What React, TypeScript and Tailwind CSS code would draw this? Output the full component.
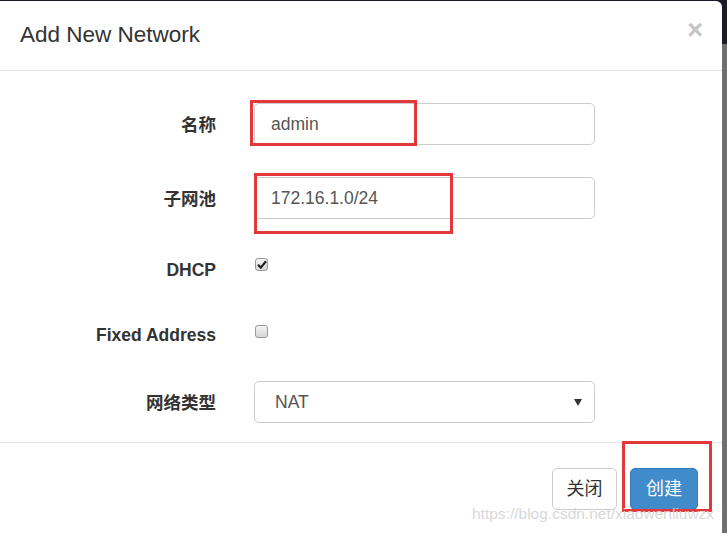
import React from 'react'

const font = { fontFamily: '"Liberation Sans", "Noto Sans CJK SC", sans-serif' }

function Label({ children }: { children: React.ReactNode }) {
  return (
    <div className="w-[216px] shrink-0 pt-[3px] text-right text-[17.5px] font-bold text-[#333]">
      {children}
    </div>
  )
}

function Checkbox({ checked }: { checked?: boolean }) {
  return (
    <span className="flex h-[13px] w-[13px] items-center justify-center rounded-[3px] border border-[#9a9a9a] bg-gradient-to-b from-[#f4f4f4] to-[#d6d6d6]">
      {checked && (
        <svg width="10" height="9" viewBox="0 0 10 9">
          <path d="M1 4.8 L3.8 7.6 L9 1.2" fill="none" stroke="#222" strokeWidth="2.2" />
        </svg>
      )}
    </span>
  )
}

export default function App() {
  return (
    <div
      style={font}
      className="relative h-[533px] w-[727px] overflow-hidden bg-[linear-gradient(to_bottom,#1d1a29_0px,#1d1a29_44px,#6f6f6f_44px)] pt-[1px]"
    >
      <div className="h-[532px] w-[722px] rounded-tr-[6px] bg-white">
        {/* header */}
        <div className="relative flex h-[70px] items-center border-b border-[#e5e5e5] px-[20px]">
          <h4 className="text-[22.5px] leading-none text-[#333]">Add New Network</h4>
          <span className="absolute right-[19px] top-[16px] text-[27px] font-bold leading-none text-[#c4c4c4]">×</span>
        </div>

        {/* body */}
        <div className="pb-[19px] pt-[32px]">
          <div className="flex h-[42px] items-center">
            <Label>名称</Label>
            <div className="ml-[38px] flex h-[42px] w-[341px] items-center rounded-[5px] border border-[#ccc] pl-[16px] text-[17.5px] text-[#555]">
              admin
            </div>
          </div>
          <div className="mt-[32px] flex h-[42px] items-center">
            <Label>子网池</Label>
            <div className="ml-[38px] flex h-[42px] w-[341px] items-center rounded-[5px] border border-[#ccc] pl-[16px] text-[17.5px] text-[#555]">
              172.16.1.0/24
            </div>
          </div>
          <div className="mt-[32px] flex h-[36px] items-center">
            <Label>DHCP</Label>
            <div className="ml-[39px] -mt-[9px]">
              <Checkbox checked />
            </div>
          </div>
          <div className="mt-[29px] flex h-[36px] items-center">
            <Label>Fixed Address</Label>
            <div className="ml-[39px] -mt-[5px]">
              <Checkbox />
            </div>
          </div>
          <div className="mt-[29px] flex h-[42px] items-center">
            <Label>网络类型</Label>
            <div className="ml-[38px] flex h-[42px] w-[341px] items-center justify-between rounded-[5px] border border-[#ccc] pl-[20px] pr-[12px] text-[17.5px] text-[#555]">
              <span>NAT</span>
              <svg width="8" height="7" viewBox="0 0 8 7">
                <path d="M0 0 H8 L4 7 Z" fill="#333" />
              </svg>
            </div>
          </div>
        </div>

        {/* footer */}
        <div className="flex justify-end gap-[13px] border-t border-[#e5e5e5] pr-[24px] pt-[25px]">
          <button className="h-[42px] w-[65px] rounded-[5px] border border-[#ccc] bg-white text-[18px] text-[#333]">
            关闭
          </button>
          <button className="h-[42px] w-[68px] rounded-[5px] border border-[#357ebd] bg-[#428bca] text-[18px] text-white">
            创建
          </button>
        </div>
      </div>

      {/* annotations */}
      <div className="absolute left-[250px] top-[100px] h-[46px] w-[167px] border-[3px] border-[#e2373b]" />
      <div className="absolute left-[254px] top-[173px] h-[61px] w-[199px] border-[3px] border-[#e2373b]" />
      <div className="absolute left-[622px] top-[441px] h-[71px] w-[90px] border-[3px] border-[#e2373b]" />
      <div className="absolute left-[472px] top-[506px] text-[15.5px] leading-none text-[#d8d8d8]">
        https://blog.csdn.net/xiaowenliuwzx
      </div>
    </div>
  )
}
